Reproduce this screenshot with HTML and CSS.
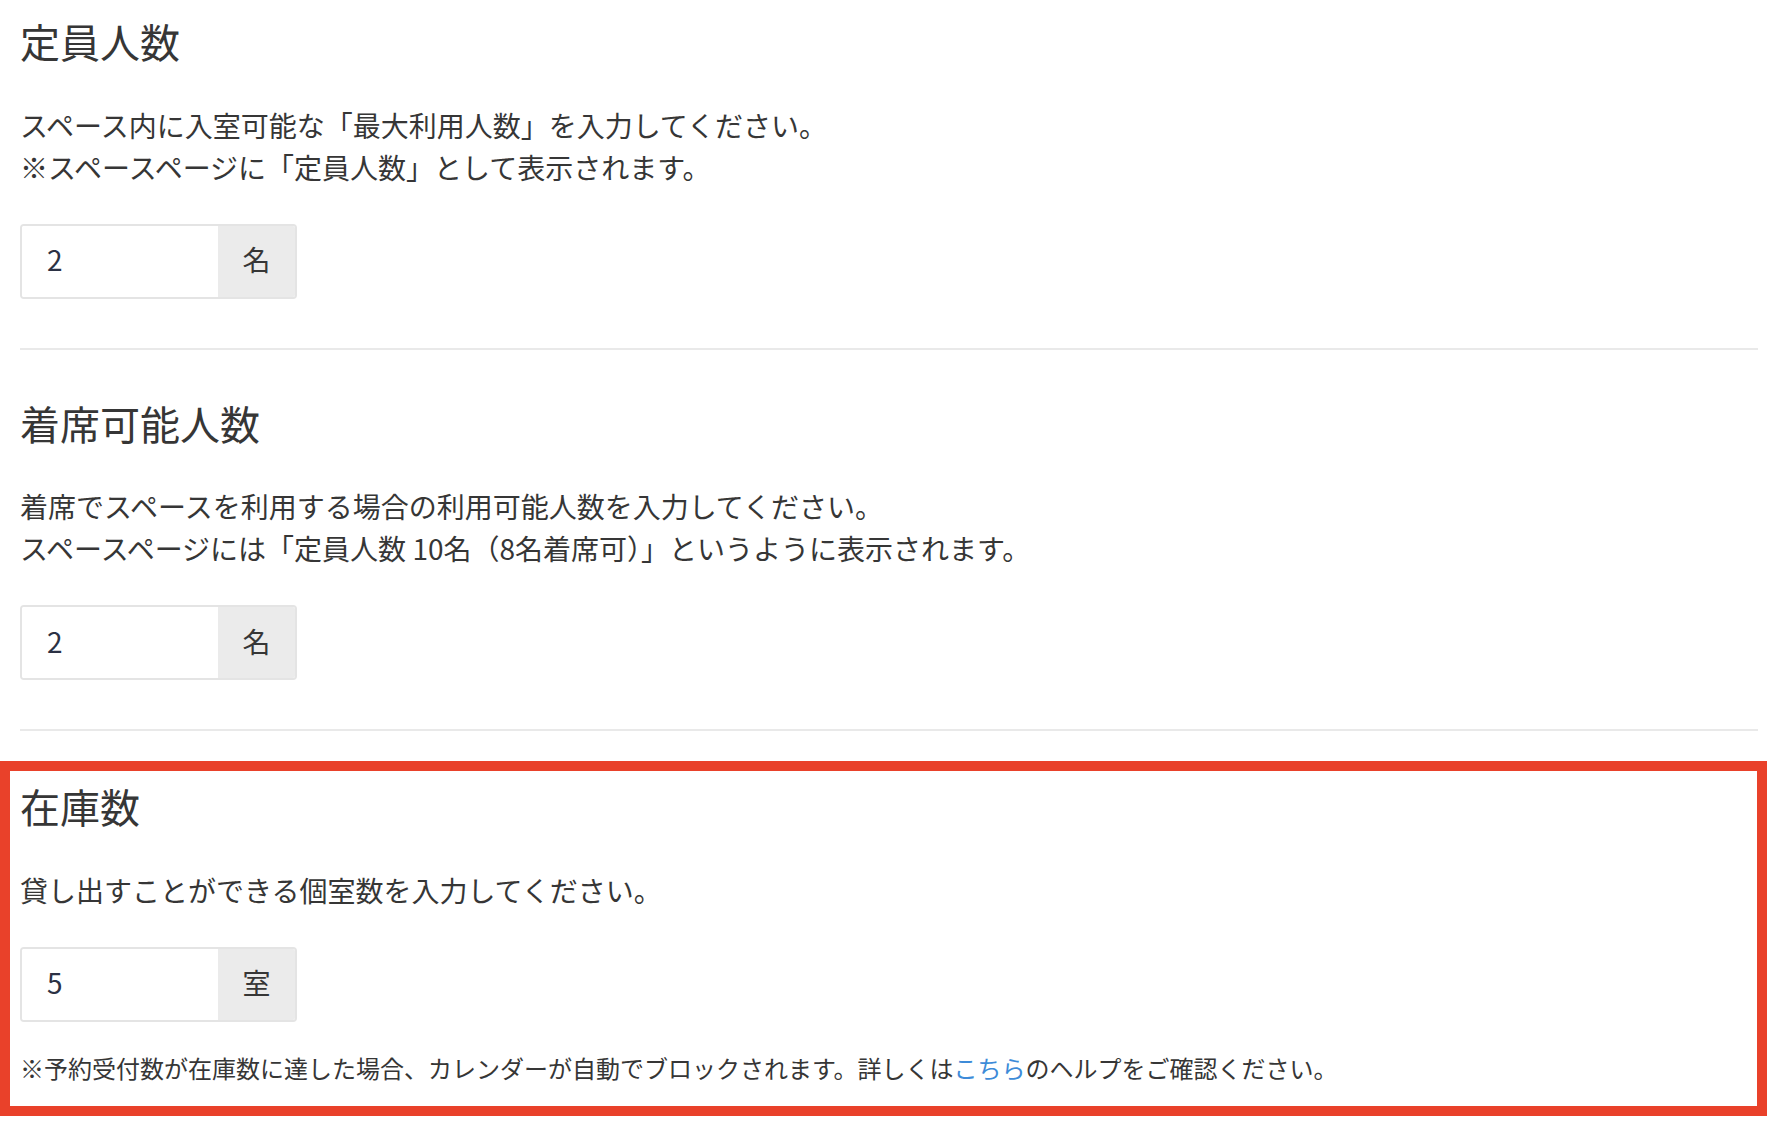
FILE: index.html
```html
<!DOCTYPE html>
<html lang="ja">
<head>
<meta charset="utf-8">
<title>スペース設定</title>
<link rel="stylesheet" href="styles.css">
</head>
<body>
<main class="form">
  <section class="field">
    <h2 class="field-title">定員人数</h2>
    <p class="field-help">スペース内に入室可能な「最大利用人数」を入力してください。<br>※スペースページに「定員人数」として表示されます。</p>
    <div class="input-group">
      <input class="input" type="text" value="2">
      <span class="addon">名</span>
    </div>
  </section>
  <hr class="divider">
  <section class="field">
    <h2 class="field-title">着席可能人数</h2>
    <p class="field-help">着席でスペースを利用する場合の利用可能人数を入力してください。<br>スペースページには「定員人数 10名（8名着席可）」というように表示されます。</p>
    <div class="input-group">
      <input class="input" type="text" value="2">
      <span class="addon">名</span>
    </div>
  </section>
  <hr class="divider">
  <section class="field field--highlight">
    <h2 class="field-title">在庫数</h2>
    <p class="field-help">貸し出すことができる個室数を入力してください。</p>
    <div class="input-group">
      <input class="input" type="text" value="5">
      <span class="addon">室</span>
    </div>
    <p class="field-note">※予約受付数が在庫数に達した場合、カレンダーが自動でブロックされます。詳しくは<a class="link" href="#">こちら</a>のヘルプをご確認ください。</p>
  </section>
</main>
</body>
</html>
```

FILE: styles.css
```css
html,
body {
  margin: 0;
  padding: 0;
  background: #ffffff;
}

body {
  font-family: "Noto Sans CJK JP", "Noto Sans", sans-serif;
  color: #363636;
}

/* form column */
.form {
  display: flex;
  flex-direction: column;
  width: 1738px;
  padding: 17px 0 0 20px;
}

.field + .divider {
  margin-top: 49px;
}

.divider + .field {
  margin-top: 49px;
}

.divider {
  height: 2px;
  margin: 0;
  border: 0;
  background: #e9e9e9;
}

.field-title {
  margin: 0;
  font-size: 40px;
  line-height: 48px;
  font-weight: 400;
  color: #363636;
}

.field-help {
  margin: 38.5px 0 0;
  font-size: 28px;
  line-height: 42px;
}

/* number input with unit addon */
.input-group {
  display: flex;
  box-sizing: border-box;
  width: 277px;
  height: 75px;
  margin-top: 36px;
  border: 2px solid #e4e4e4;
  border-radius: 4px;
  overflow: hidden;
}

.input {
  box-sizing: border-box;
  flex: none;
  width: 196px;
  height: 100%;
  margin: 0;
  padding: 0 0 4px 25px;
  border: 0;
  outline: none;
  background: #ffffff;
  font-family: inherit;
  font-size: 28px;
  color: #2b3144;
}

.addon {
  display: flex;
  flex: 1;
  align-items: center;
  justify-content: center;
  padding-bottom: 4px;
  background: #ebebeb;
  font-size: 28px;
  color: #363636;
}

.field-note {
  margin: 28px 0 0;
  font-size: 24px;
  line-height: 36px;
}

.link {
  color: #3d8bd8;
  text-decoration: none;
}

/* highlighted field */
.divider + .field--highlight {
  margin-top: 30px;
}

.field--highlight {
  margin-right: -9px;
  margin-left: -20px;
  padding: 11px 9px 20.5px 10px;
  border: 10px solid #e9412a;
}
```
